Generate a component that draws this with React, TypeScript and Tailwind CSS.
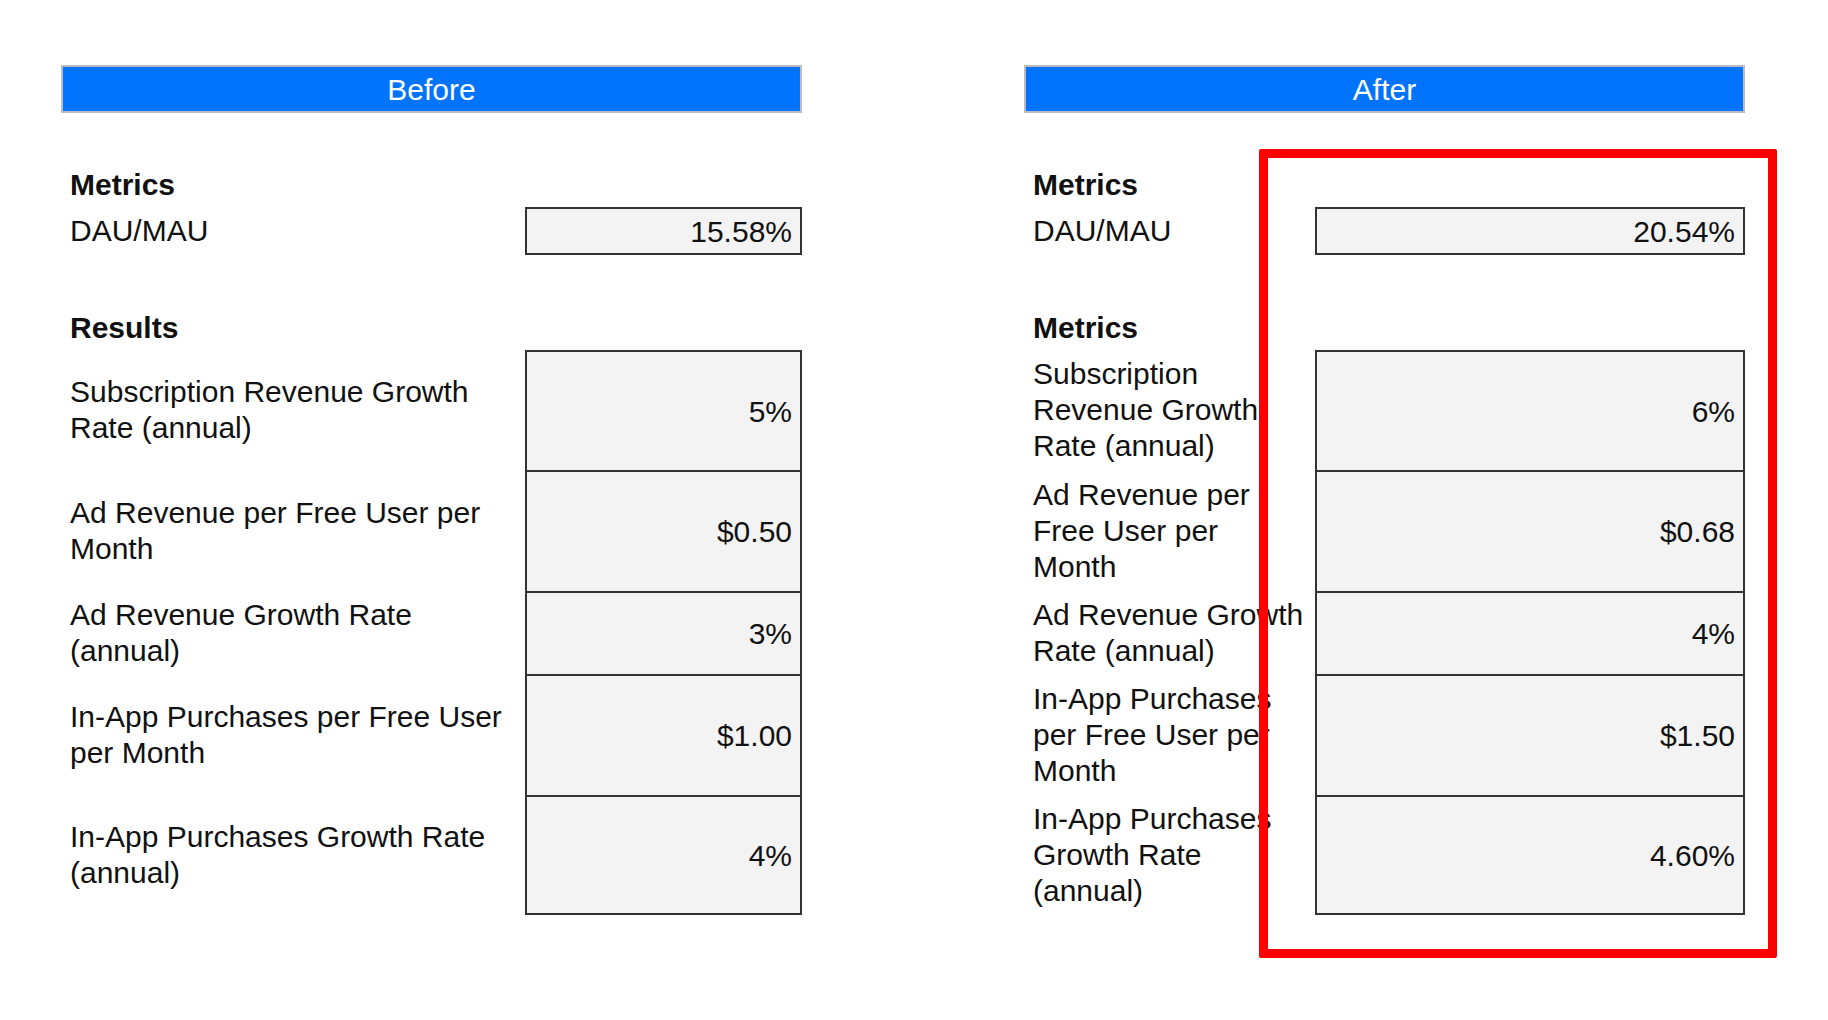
type Row = { label: string; value: string; h: string };

const beforeRows: Row[] = [
  { label: "Subscription Revenue Growth Rate (annual)", value: "5%", h: "h-[120px]" },
  { label: "Ad Revenue per Free User per Month", value: "$0.50", h: "h-[121px]" },
  { label: "Ad Revenue Growth Rate (annual)", value: "3%", h: "h-[83px]" },
  { label: "In-App Purchases per Free User per Month", value: "$1.00", h: "h-[121px]" },
  { label: "In-App Purchases Growth Rate (annual)", value: "4%", h: "h-[120px]" },
];

const afterRows: Row[] = [
  { label: "Subscription Revenue Growth Rate (annual)", value: "6%", h: "h-[120px]" },
  { label: "Ad Revenue per Free User per Month", value: "$0.68", h: "h-[121px]" },
  { label: "Ad Revenue Growth Rate (annual)", value: "4%", h: "h-[83px]" },
  { label: "In-App Purchases per Free User per Month", value: "$1.50", h: "h-[121px]" },
  { label: "In-App Purchases Growth Rate (annual)", value: "4.60%", h: "h-[120px]" },
];

function Panel({
  title,
  dau,
  section,
  rows,
  labelW,
  boxW,
}: {
  title: string;
  dau: string;
  section: string;
  rows: Row[];
  labelW: string;
  boxW: string;
}) {
  return (
    <div className="flex flex-col">
      <div className="flex h-[48px] items-center justify-center border-2 border-[#b9bcc0] bg-[#0074ff] pt-[2px] text-[30px] leading-none text-white">
        {title}
      </div>

      <div className="mt-[54px] pl-[9px] text-[30px] font-bold leading-[36px]">Metrics</div>
      <div className="mt-[4px] flex h-[48px] items-center">
        <div className={`pl-[9px] ${labelW} text-[30px] leading-[36px]`}>DAU/MAU</div>
        <div
          className={`ml-auto flex h-[48px] ${boxW} items-center justify-end border-2 border-[#333] bg-[#f3f3f3] pr-[8px] text-[30px]`}
        >
          {dau}
        </div>
      </div>

      <div className="mt-[55px] pl-[9px] text-[30px] font-bold leading-[36px]">{section}</div>
      <div className="mt-[4px] flex flex-col">
        {rows.map((r, i) => (
          <div key={r.label} className={`flex ${r.h} items-center`}>
            <div className={`pl-[9px] ${labelW} text-[30px] leading-[36px]`}>{r.label}</div>
            <div
              className={`ml-auto flex h-full ${boxW} items-center justify-end border-x-2 border-t-2 border-[#333] bg-[#f3f3f3] pr-[8px] text-[30px] ${
                i === rows.length - 1 ? "border-b-2" : ""
              }`}
            >
              {r.value}
            </div>
          </div>
        ))}
      </div>
    </div>
  );
}

export default function App() {
  return (
    <div
      className="relative h-[1020px] w-[1828px] overflow-hidden bg-white text-[#111]"
      style={{ fontFamily: '"Liberation Sans", Arial, sans-serif' }}
    >
      <div className="grid grid-cols-[741px_721px] gap-x-[222px] pl-[61px] pt-[65px]">
        <Panel
          title="Before"
          dau="15.58%"
          section="Results"
          rows={beforeRows}
          labelW="w-[464px]"
          boxW="w-[277px]"
        />
        <Panel
          title="After"
          dau="20.54%"
          section="Metrics"
          rows={afterRows}
          labelW="w-[283px]"
          boxW="w-[430px]"
        />
      </div>

      {/* highlight frame over the After values */}
      <div className="pointer-events-none absolute left-[1259px] top-[149px] h-[809px] w-[518px] rounded-[2px] border-[9px] border-[#ff0000]" />
    </div>
  );
}
